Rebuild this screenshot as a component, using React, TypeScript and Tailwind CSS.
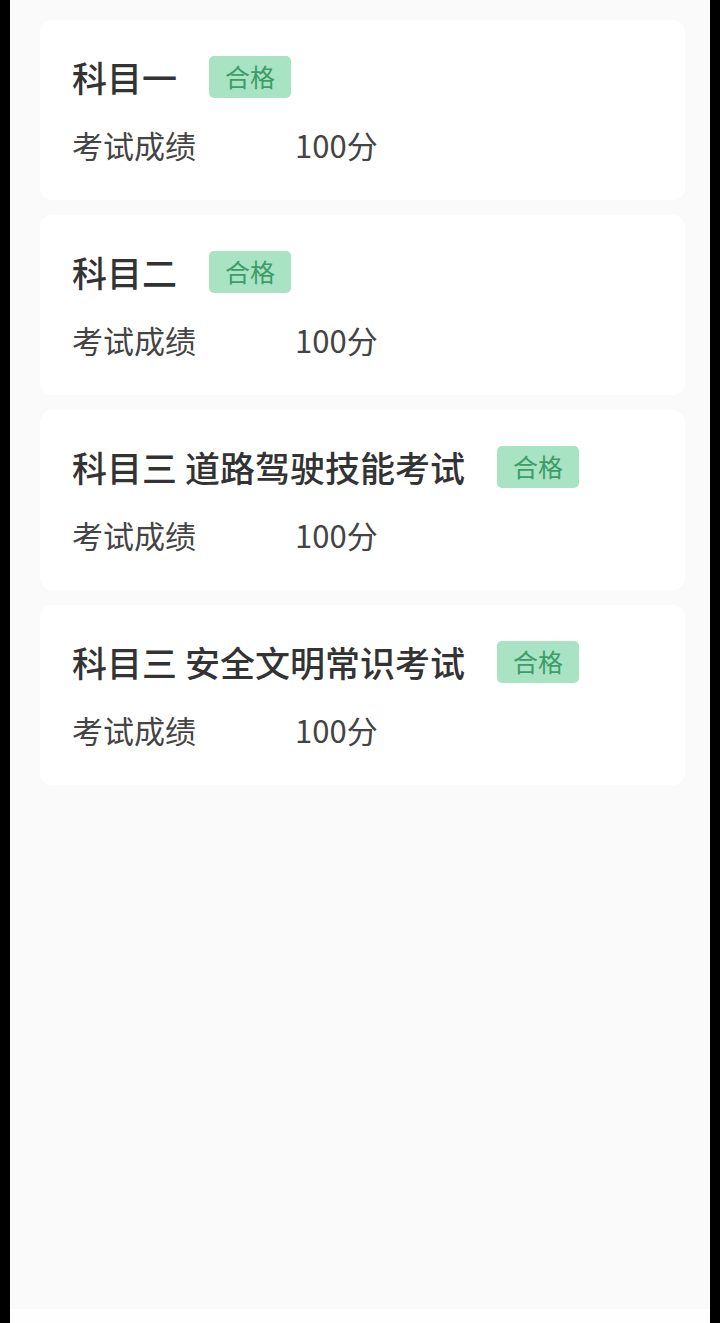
const exams = [
    { name: '科目一', score: 100 },
    { name: '科目二', score: 100 },
    { name: '科目三 道路驾驶技能考试', score: 100 },
    { name: '科目三 安全文明常识考试', score: 100 },
];

// Single result card
function ExamCard({ name, score }: { name: string; score: number }) {
    return (
        <div className="h-[180px] rounded-xl bg-white pl-[32px] pr-[24px] pt-[35px]">
            <div className="flex h-[44px] items-center">
                <span className="text-[35px] leading-[44px] font-medium text-[#333333]">{name}</span>
                <span className="ml-[32px] flex h-[42px] items-center rounded-[5px] bg-[#a8e3c3] px-[16px] text-[25px] text-[#3d9c68]">
                    合格
                </span>
            </div>
            <div className="mt-[26px] flex h-[40px] items-center text-[31px] text-[#444444]">
                <span className="w-[223px]">考试成绩</span>
                <span>{score}分</span>
            </div>
        </div>
    );
}

export default function App() {
    return (
        <div
            className="flex h-[1323px] w-[720px] bg-black"
            style={{ fontFamily: '"Noto Sans CJK SC", "Noto Sans", sans-serif' }}
        >
            <div className="w-[10px]" />
            <div className="flex flex-1 flex-col bg-[#fafafa]">
                <div className="flex flex-1 flex-col gap-[15px] pl-[30px] pr-[25px] pt-[20px]">
                    {exams.map((e) => (
                        <ExamCard key={e.name} name={e.name} score={e.score} />
                    ))}
                </div>
                <div className="h-[14px] bg-[#fefefe]" />
            </div>
            <div className="w-[10px]" />
        </div>
    );
}
